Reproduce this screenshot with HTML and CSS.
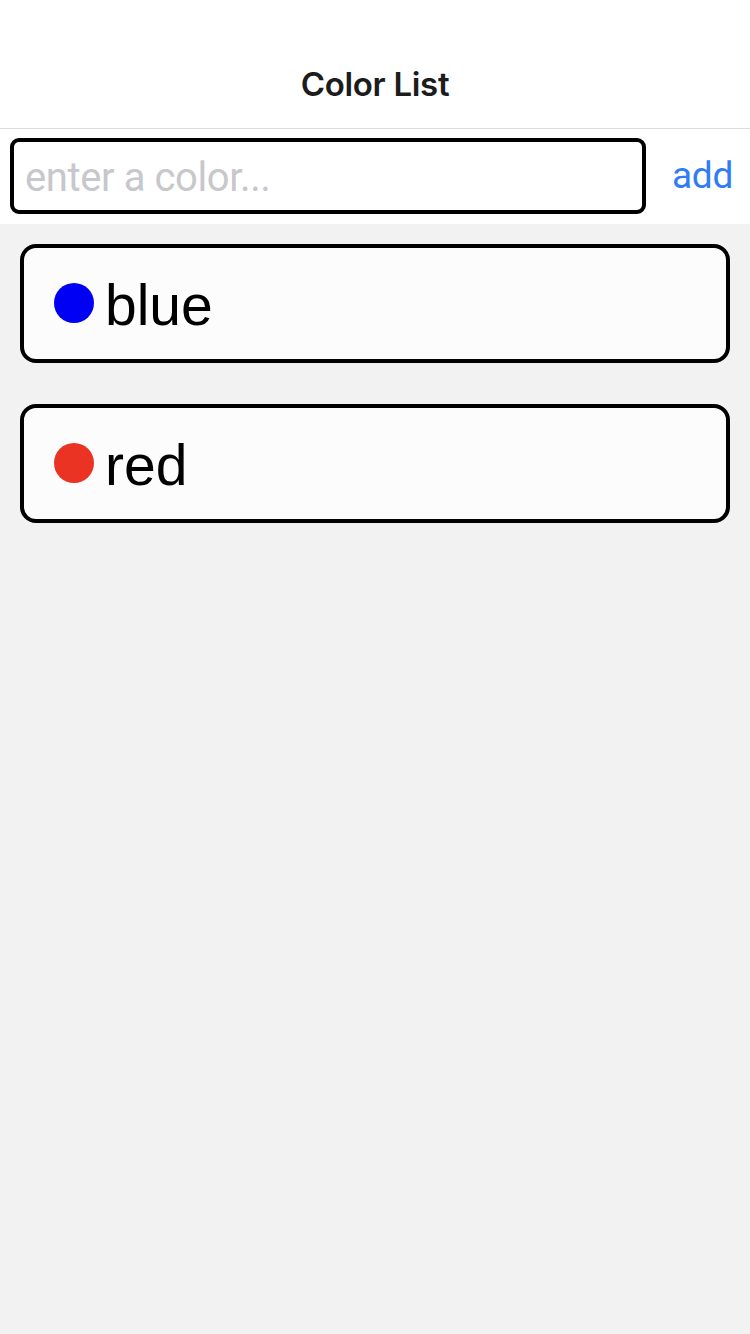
FILE: index.html
```html
<!DOCTYPE html>
<html>
<head>
<meta charset="utf-8">
<link rel="stylesheet" href="styles.css">
</head>
<body>
<div class="app">
  <header class="nav">
    <h1 class="title">Color List</h1>
  </header>
  <div class="form">
    <div class="input"><span class="placeholder">enter a color...</span></div>
    <span class="add">add</span>
  </div>
  <main class="list">
    <div class="card"><span class="dot dot-blue"></span><span class="label">blue</span></div>
    <div class="card"><span class="dot dot-red"></span><span class="label">red</span></div>
  </main>
</div>
</body>
</html>
```
FILE: styles.css
```css
html, body { margin: 0; padding: 0; }
body { width: 750px; height: 1334px; background: #f2f2f2; font-family: Roboto, "Liberation Sans", sans-serif; }
.app { display: flex; flex-direction: column; min-height: 1334px; }
.nav { height: 128px; background: #fff; border-bottom: 1px solid #dcdcdc; display: flex; align-items: flex-end; justify-content: center; box-sizing: content-box; }
.title { margin: 0 0 24px; font-family: Inter, Roboto, sans-serif; font-weight: 600; font-size: 33px; color: #1c1c1c; line-height: 40px; letter-spacing: -0.3px; }
.form { background: #fff; height: 95px; display: flex; align-items: flex-start; padding: 9px 0 0 10px; box-sizing: border-box; }
.input { width: 636px; height: 76px; border: 4px solid #000; border-radius: 9px; box-sizing: border-box; display: flex; align-items: center; padding-left: 11px; }
.placeholder { color: #c7c7cc; font-size: 40px; letter-spacing: -0.4px; font-family: Roboto, sans-serif; margin-top: 2px; }
.add { color: #2f7cf6; font-size: 37px; margin-left: 26px; line-height: 76px; letter-spacing: -0.3px; }
.list { display: flex; flex-direction: column; padding: 20px; gap: 41px; }
.card { height: 119px; border: 4px solid #000; border-radius: 16px; background: #fcfcfc; box-sizing: border-box; display: flex; align-items: center; padding-left: 30px; }
.dot { width: 40px; height: 40px; border-radius: 50%; margin-right: 11px; margin-top: -1px; }
.dot-blue { background: #0000f5; }
.dot-red { background: #eb3323; }
.label { font-family: "Liberation Sans", Arial, sans-serif; font-size: 57px; color: #000; line-height: 1; margin-top: 4px; }
```
